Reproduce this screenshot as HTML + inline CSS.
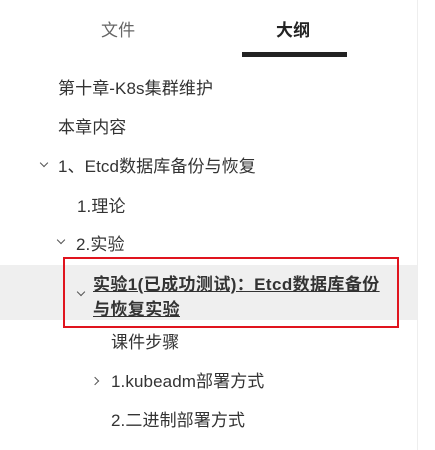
<!DOCTYPE html>
<html><head><meta charset="utf-8"><style>
body{margin:0;width:435px;height:450px;background:#fff;position:relative;overflow:hidden;font-family:"Liberation Sans","Noto Sans CJK SC",sans-serif;color:#333;}
.t{position:absolute;font-size:17px;line-height:20px;white-space:nowrap;letter-spacing:0.1px;}
.ch{position:absolute;width:5px;height:5px;border-right:1.3px solid #555;border-bottom:1.3px solid #555;}
</style></head><body>
<div style="position:absolute;left:417px;top:0;width:1px;height:450px;background:#eee"></div>
<div class="t" style="left:101px;top:21px;font-size:17px;color:#666">文件</div>
<div class="t" style="left:276px;top:21px;font-size:17px;font-weight:bold;color:#222">大纲</div>
<div style="position:absolute;left:242px;top:52px;width:105px;height:5px;background:#222"></div>
<div class="t" style="left:58px;top:79px">第十章-K8s集群维护</div>
<div class="t" style="left:58px;top:118px">本章内容</div>
<div class="ch" style="left:41px;top:160px;transform:rotate(45deg)"></div>
<div class="t" style="left:58px;top:157px">1、Etcd数据库备份与恢复</div>
<div class="t" style="left:77px;top:197px">1.理论</div>
<div class="ch" style="left:58px;top:237px;transform:rotate(45deg)"></div>
<div class="t" style="left:76px;top:235px">2.实验</div>
<div style="position:absolute;left:0;top:265px;width:417px;height:55px;background:#efefef"></div>
<div class="ch" style="left:78px;top:289px;transform:rotate(45deg)"></div>
<div class="t" style="left:93px;top:272px;font-weight:bold;text-decoration:underline;color:#333;line-height:25px;letter-spacing:0.4px">实验1(已成功测试)：Etcd数据库备份<br>与恢复实验</div>
<div style="position:absolute;left:63px;top:257px;width:332px;height:67px;border:2px solid #e0141e"></div>
<div class="t" style="left:111px;top:333px">课件步骤</div>
<div class="ch" style="left:92px;top:378px;transform:rotate(-45deg)"></div>
<div class="t" style="left:111px;top:372px">1.kubeadm部署方式</div>
<div class="t" style="left:111px;top:411px">2.二进制部署方式</div>
</body></html>
